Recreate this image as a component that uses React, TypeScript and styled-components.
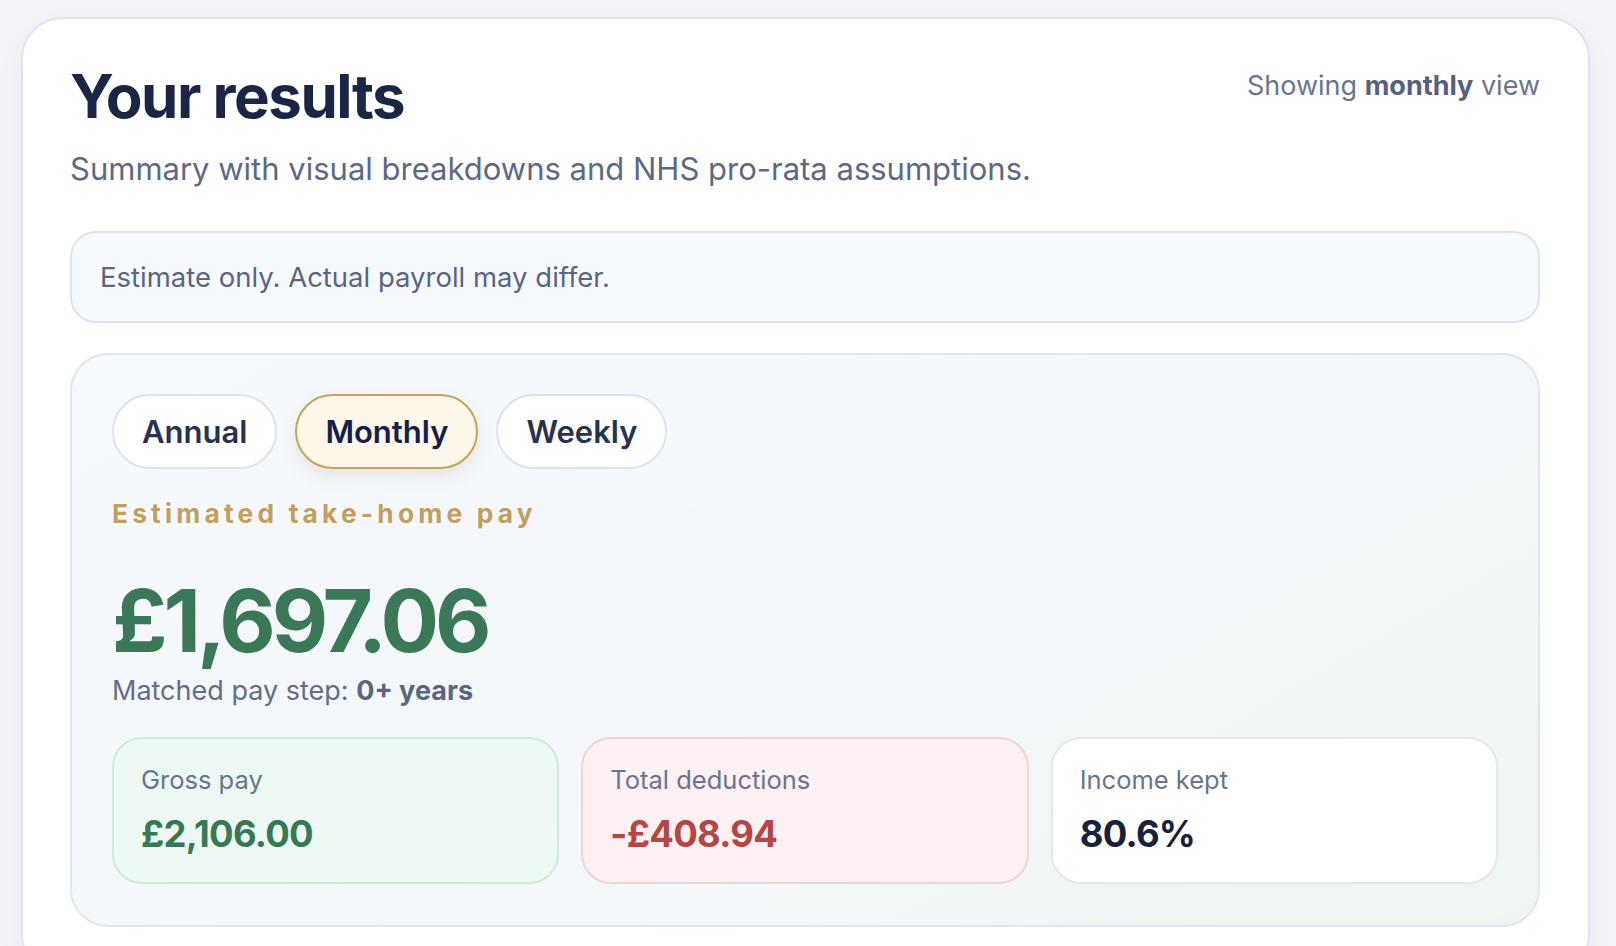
import * as React from 'react'
import styled, { createGlobalStyle } from 'styled-components'

const GlobalStyle = createGlobalStyle`
    html, body {
        margin: 0;
        padding: 0;
        background: #f1f3f7;
        font-family: Inter, "Open Sans", "Liberation Sans", sans-serif;
        -webkit-font-smoothing: antialiased;
    }
`

type Tone = 'green' | 'red' | 'plain'

const periods = ['Annual', 'Monthly', 'Weekly']

const stats: { label: string; value: string; tone: Tone }[] = [
    { label: 'Gross pay', value: '£2,106.00', tone: 'green' },
    { label: 'Total deductions', value: '-£408.94', tone: 'red' },
    { label: 'Income kept', value: '80.6%', tone: 'plain' },
]

const App = (): JSX.Element => {
    const [period, setPeriod] = React.useState('Monthly')

    return (
        <Page>
            <GlobalStyle />
            <Card>
                <Header>
                    <div>
                        <Title>Your results</Title>
                        <Subtitle>Summary with visual breakdowns and NHS pro-rata assumptions.</Subtitle>
                    </div>
                    <ViewNote>
                        Showing <b>{period.toLowerCase()}</b> view
                    </ViewNote>
                </Header>

                <Notice>Estimate only. Actual payroll may differ.</Notice>

                <Results>
                    <Tabs>
                        {periods.map((p) => (
                            <Tab key={p} $active={p === period} onClick={() => setPeriod(p)}>
                                {p}
                            </Tab>
                        ))}
                    </Tabs>
                    <Eyebrow>Estimated take-home pay</Eyebrow>
                    <Amount>£1,697.06</Amount>
                    <Step>
                        Matched pay step: <b>0+ years</b>
                    </Step>
                    <StatGrid>
                        {stats.map((s) => (
                            <Stat key={s.label} $tone={s.tone}>
                                <StatLabel>{s.label}</StatLabel>
                                <StatValue $tone={s.tone}>{s.value}</StatValue>
                            </Stat>
                        ))}
                    </StatGrid>
                </Results>
            </Card>
        </Page>
    )
}

const Page = styled.div`
    padding: 17px 26px 0 21px;
    min-height: 100vh;
    box-sizing: border-box;
`
const Card = styled.section`
    background: #ffffff;
    border: 2px solid #dfe5ef;
    border-radius: 42px;
    padding: 44px 48px 48px 47px;
    box-shadow: 0 10px 30px rgba(30, 45, 80, 0.04);
`
const Header = styled.div`
    display: flex;
    justify-content: space-between;
    align-items: flex-start;
`
const Title = styled.h1`
    margin: 0;
    font-size: 60px;
    line-height: 1.1;
    font-weight: 700;
    letter-spacing: -0.025em;
    color: #1a2643;
`
const Subtitle = styled.p`
    margin: 20px 0 0;
    font-size: 31px;
    line-height: 1.3;
    color: #5d6984;
`
const ViewNote = styled.div`
    margin-top: 6px;
    font-size: 27px;
    color: #6a7490;
    b {
        font-weight: 700;
        color: #55607b;
    }
`
const Notice = styled.div`
    margin-top: 42px;
    height: 92px;
    box-sizing: border-box;
    display: flex;
    align-items: center;
    padding: 0 28px;
    background: #f7fafd;
    border: 2px solid #dbe5f1;
    border-radius: 26px;
    font-size: 27.5px;
    color: #5a6480;
`
const Results = styled.div`
    margin-top: 30px;
    padding: 39px 40px 41px;
    border: 2px solid #dfe6f0;
    border-radius: 38px;
    background: linear-gradient(150deg, #f6f9fd 0%, #f2f6f9 55%, #eef5f1 100%);
`
const Tabs = styled.div`
    display: flex;
    gap: 18px;
`
const Tab = styled.button<{ $active: boolean }>`
    height: 75px;
    padding: 0 28px;
    border-radius: 38px;
    font-family: inherit;
    font-size: 31px;
    font-weight: 600;
    cursor: pointer;
    color: ${(p) => (p.$active ? '#14204a' : '#26324f')};
    background: ${(p) => (p.$active ? '#fdf7e9' : '#ffffff')};
    border: 2px solid ${(p) => (p.$active ? '#c7a25a' : '#dde4ef')};
    box-shadow: ${(p) => (p.$active ? '0 8px 18px rgba(120, 100, 60, 0.12)' : 'none')};
`
const Eyebrow = styled.div`
    margin-top: 29px;
    font-size: 26.3px;
    font-weight: 700;
    letter-spacing: 0.16em;
    color: #c29f5f;
`
const Amount = styled.div`
    margin-top: 48px;
    font-size: 87px;
    line-height: 1;
    font-weight: 700;
    letter-spacing: -0.047em;
    color: #3a7858;
`
const Step = styled.div`
    margin-top: 10px;
    font-size: 27px;
    color: #636d88;
    b {
        font-weight: 700;
        color: #5a6580;
    }
`
const StatGrid = styled.div`
    margin-top: 30px;
    display: grid;
    grid-template-columns: repeat(3, 1fr);
    gap: 22px;
`
const toneBg = { green: '#eef8f2', red: '#fcf0f2', plain: '#ffffff' }
const toneBorder = { green: '#cfe9da', red: '#efd3d7', plain: '#e3e8f0' }
const toneValue = { green: '#377955', red: '#b44646', plain: '#17213a' }

const Stat = styled.div<{ $tone: Tone }>`
    height: 147px;
    box-sizing: border-box;
    padding: 25px 27px;
    border-radius: 30px;
    background: ${(p) => toneBg[p.$tone]};
    border: 2px solid ${(p) => toneBorder[p.$tone]};
`
const StatLabel = styled.div`
    font-size: 25.5px;
    color: #6a7490;
`
const StatValue = styled.div<{ $tone: Tone }>`
    margin-top: 17px;
    font-size: 36.5px;
    font-weight: 700;
    letter-spacing: -0.02em;
    color: ${(p) => toneValue[p.$tone]};
`

export default App
